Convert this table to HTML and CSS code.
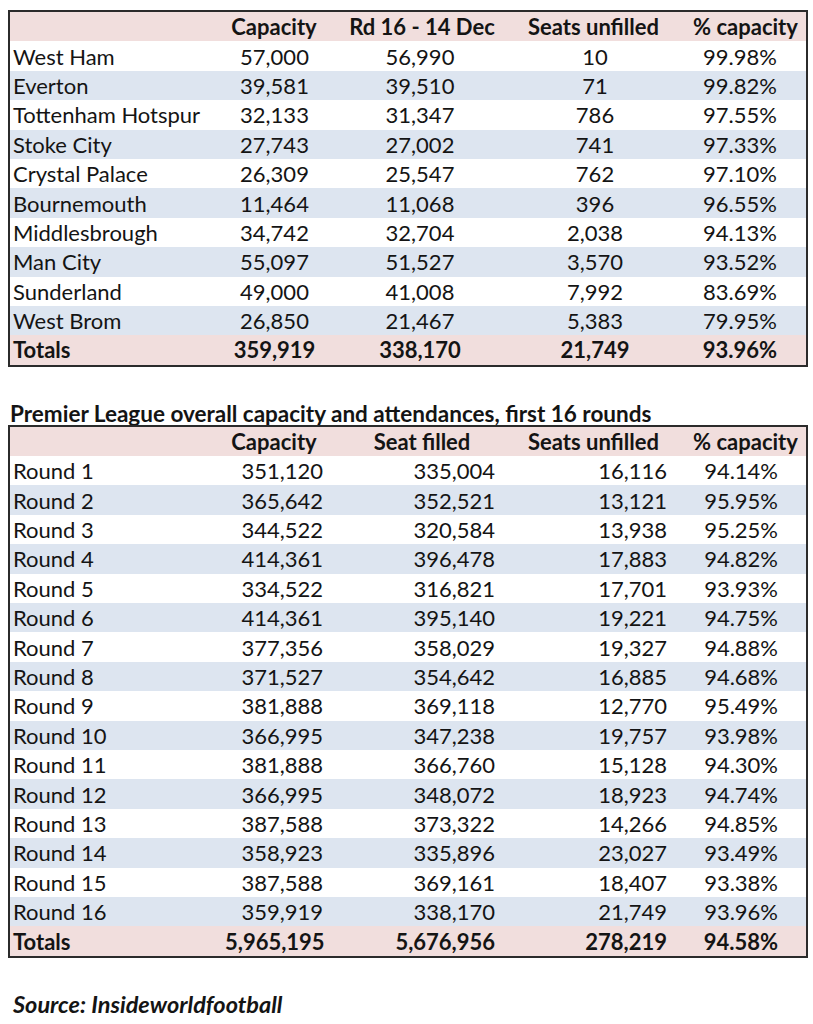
FILE: index.html
```html
<!DOCTYPE html>
<html>
<head>
<meta charset="utf-8">
<link rel="stylesheet" href="styles.css">
</head>
<body>
<div class="sheet">
  <div class="tbl t1">
    <div class="row head"><span class="c a"></span><span class="c b">Capacity</span><span class="c c3">Rd 16 - 14 Dec</span><span class="c d">Seats unfilled</span><span class="c e">% capacity</span></div>
    <div class="row"><span class="c a">West Ham</span><span class="c b">57,000</span><span class="c c3">56,990</span><span class="c d">10</span><span class="c e">99.98%</span></div>
    <div class="row alt"><span class="c a">Everton</span><span class="c b">39,581</span><span class="c c3">39,510</span><span class="c d">71</span><span class="c e">99.82%</span></div>
    <div class="row"><span class="c a">Tottenham Hotspur</span><span class="c b">32,133</span><span class="c c3">31,347</span><span class="c d">786</span><span class="c e">97.55%</span></div>
    <div class="row alt"><span class="c a">Stoke City</span><span class="c b">27,743</span><span class="c c3">27,002</span><span class="c d">741</span><span class="c e">97.33%</span></div>
    <div class="row"><span class="c a">Crystal Palace</span><span class="c b">26,309</span><span class="c c3">25,547</span><span class="c d">762</span><span class="c e">97.10%</span></div>
    <div class="row alt"><span class="c a">Bournemouth</span><span class="c b">11,464</span><span class="c c3">11,068</span><span class="c d">396</span><span class="c e">96.55%</span></div>
    <div class="row"><span class="c a">Middlesbrough</span><span class="c b">34,742</span><span class="c c3">32,704</span><span class="c d">2,038</span><span class="c e">94.13%</span></div>
    <div class="row alt"><span class="c a">Man City</span><span class="c b">55,097</span><span class="c c3">51,527</span><span class="c d">3,570</span><span class="c e">93.52%</span></div>
    <div class="row"><span class="c a">Sunderland</span><span class="c b">49,000</span><span class="c c3">41,008</span><span class="c d">7,992</span><span class="c e">83.69%</span></div>
    <div class="row alt"><span class="c a">West Brom</span><span class="c b">26,850</span><span class="c c3">21,467</span><span class="c d">5,383</span><span class="c e">79.95%</span></div>
    <div class="row total"><span class="c a">Totals</span><span class="c b">359,919</span><span class="c c3">338,170</span><span class="c d">21,749</span><span class="c e">93.96%</span></div>
  </div>

  <div class="title">Premier League overall capacity and attendances, first 16 rounds</div>

  <div class="tbl t2">
    <div class="row head"><span class="c a"></span><span class="c b">Capacity</span><span class="c c3">Seat filled</span><span class="c d">Seats unfilled</span><span class="c e">% capacity</span></div>
    <div class="row"><span class="c a">Round 1</span><span class="c b">351,120</span><span class="c c3">335,004</span><span class="c d">16,116</span><span class="c e">94.14%</span></div>
    <div class="row alt"><span class="c a">Round 2</span><span class="c b">365,642</span><span class="c c3">352,521</span><span class="c d">13,121</span><span class="c e">95.95%</span></div>
    <div class="row"><span class="c a">Round 3</span><span class="c b">344,522</span><span class="c c3">320,584</span><span class="c d">13,938</span><span class="c e">95.25%</span></div>
    <div class="row alt"><span class="c a">Round 4</span><span class="c b">414,361</span><span class="c c3">396,478</span><span class="c d">17,883</span><span class="c e">94.82%</span></div>
    <div class="row"><span class="c a">Round 5</span><span class="c b">334,522</span><span class="c c3">316,821</span><span class="c d">17,701</span><span class="c e">93.93%</span></div>
    <div class="row alt"><span class="c a">Round 6</span><span class="c b">414,361</span><span class="c c3">395,140</span><span class="c d">19,221</span><span class="c e">94.75%</span></div>
    <div class="row"><span class="c a">Round 7</span><span class="c b">377,356</span><span class="c c3">358,029</span><span class="c d">19,327</span><span class="c e">94.88%</span></div>
    <div class="row alt"><span class="c a">Round 8</span><span class="c b">371,527</span><span class="c c3">354,642</span><span class="c d">16,885</span><span class="c e">94.68%</span></div>
    <div class="row"><span class="c a">Round 9</span><span class="c b">381,888</span><span class="c c3">369,118</span><span class="c d">12,770</span><span class="c e">95.49%</span></div>
    <div class="row alt"><span class="c a">Round 10</span><span class="c b">366,995</span><span class="c c3">347,238</span><span class="c d">19,757</span><span class="c e">93.98%</span></div>
    <div class="row"><span class="c a">Round 11</span><span class="c b">381,888</span><span class="c c3">366,760</span><span class="c d">15,128</span><span class="c e">94.30%</span></div>
    <div class="row alt"><span class="c a">Round 12</span><span class="c b">366,995</span><span class="c c3">348,072</span><span class="c d">18,923</span><span class="c e">94.74%</span></div>
    <div class="row"><span class="c a">Round 13</span><span class="c b">387,588</span><span class="c c3">373,322</span><span class="c d">14,266</span><span class="c e">94.85%</span></div>
    <div class="row alt"><span class="c a">Round 14</span><span class="c b">358,923</span><span class="c c3">335,896</span><span class="c d">23,027</span><span class="c e">93.49%</span></div>
    <div class="row"><span class="c a">Round 15</span><span class="c b">387,588</span><span class="c c3">369,161</span><span class="c d">18,407</span><span class="c e">93.38%</span></div>
    <div class="row alt"><span class="c a">Round 16</span><span class="c b">359,919</span><span class="c c3">338,170</span><span class="c d">21,749</span><span class="c e">93.96%</span></div>
    <div class="row total"><span class="c a">Totals</span><span class="c b">5,965,195</span><span class="c c3">5,676,956</span><span class="c d">278,219</span><span class="c e">94.58%</span></div>
  </div>

  <div class="source">Source: Insideworldfootball</div>
</div>
</body>
</html>
```

FILE: styles.css
```css
html, body {
  margin: 0;
  padding: 0;
  background: #ffffff;
}

body {
  font-family: Lato, "Open Sans", sans-serif;
  font-size: 22px;
  color: #141414;
}

.sheet {
  padding: 10px 5px 0 8px;
  display: flex;
  flex-direction: column;
}

.tbl {
  width: 796px;
  border: 2px solid #2b2b2b;
  display: flex;
  flex-direction: column;
}

.row {
  display: grid;
  grid-template-columns: 215px 105px 180px 162px 134px;
  height: 29.4px;
  align-items: center;
  background: #ffffff;
}

.row.alt {
  background: #dde5f0;
}

.row.head,
.row.total {
  background: #f1dedd;
  font-weight: 700;
}

.c {
  white-space: nowrap;
  line-height: 29px;
}

.a {
  padding-left: 3px;
  text-align: left;
}

/* first table: centered values */
.t1 .b { text-align: center; padding-right: 6px; }
.t1 .c3 { text-align: center; }
.t1 .d { text-align: center; padding-left: 8px; }
.t1 .e { text-align: center; padding-left: 2px; }

/* second table: right aligned values */
.t2 .b { text-align: right; padding-right: 7px; }
.t2 .c3 { text-align: right; padding-right: 15px; }
.t2 .d { text-align: right; padding-right: 5px; }
.t2 .e { text-align: right; padding-right: 28px; }

/* header cells centered in both tables */
.head .b { text-align: center; padding: 0 7px 0 0; }
.head .c3 { text-align: center; padding: 0 0 0 4px; }
.head .d { text-align: center; padding: 0 0 0 5px; }
.head .e { text-align: center; padding: 0 0 0 13px; }

.title {
  margin-top: 36px;
  padding-left: 2px;
  font-size: 22.5px;
  font-weight: 700;
  line-height: 22px;
}

.source {
  margin-top: 35px;
  padding-left: 5px;
  font-size: 23.5px;
  font-weight: 700;
  font-style: italic;
  line-height: 22px;
}
```
